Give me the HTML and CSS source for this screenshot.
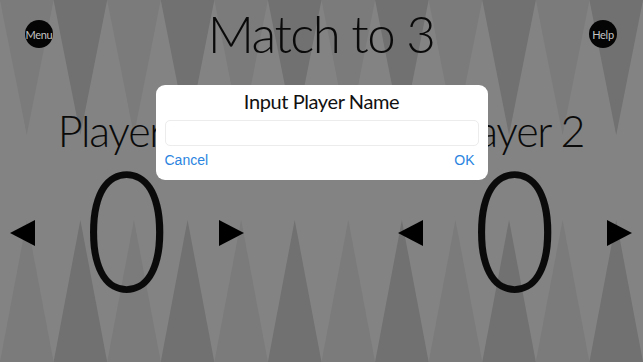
FILE: index.html
```html
<html>
  <head>
    <title>Match to 3</title>
    <link rel="stylesheet" href="styles.css">
  </head>
  <body>
    <div class="screen">
      <svg class="board" viewBox="0 0 12 362" preserveAspectRatio="none">
        <g class="point-light">
          <polygon points="0,0 0.5,135 1,0"/>
          <polygon points="2,0 2.5,135 3,0"/>
          <polygon points="4,0 4.5,135 5,0"/>
          <polygon points="6,0 6.5,135 7,0"/>
          <polygon points="8,0 8.5,135 9,0"/>
          <polygon points="10,0 10.5,135 11,0"/>
          <polygon points="0,362 0.5,220 1,362"/>
          <polygon points="2,362 2.5,220 3,362"/>
          <polygon points="4,362 4.5,220 5,362"/>
          <polygon points="6,362 6.5,220 7,362"/>
          <polygon points="8,362 8.5,220 9,362"/>
          <polygon points="10,362 10.5,220 11,362"/>
        </g>
        <g class="point-dark">
          <polygon points="1,0 1.5,135 2,0"/>
          <polygon points="3,0 3.5,135 4,0"/>
          <polygon points="5,0 5.5,135 6,0"/>
          <polygon points="7,0 7.5,135 8,0"/>
          <polygon points="9,0 9.5,135 10,0"/>
          <polygon points="11,0 11.5,135 12,0"/>
          <polygon points="1,362 1.5,220 2,362"/>
          <polygon points="3,362 3.5,220 4,362"/>
          <polygon points="5,362 5.5,220 6,362"/>
          <polygon points="7,362 7.5,220 8,362"/>
          <polygon points="9,362 9.5,220 10,362"/>
          <polygon points="11,362 11.5,220 12,362"/>
        </g>
      </svg>

      <div class="top-bar">
        <div class="round-btn">Menu</div>
        <h1 class="match">Match to 3</h1>
        <div class="round-btn">Help</div>
      </div>

      <div class="players">
        <div class="player">
          <h2 class="name">Player 1</h2>
          <div class="score-row">
            <span class="arrow left"></span>
            <span class="score">0</span>
            <span class="arrow right"></span>
          </div>
        </div>
        <div class="player">
          <h2 class="name">Player 2</h2>
          <div class="score-row">
            <span class="arrow left"></span>
            <span class="score">0</span>
            <span class="arrow right"></span>
          </div>
        </div>
      </div>

      <div class="overlay">
        <div class="alert">
          <div class="alert-title">Input Player Name</div>
          <input class="alert-input" type="text">
          <div class="alert-actions">
            <span>Cancel</span>
            <span>OK</span>
          </div>
        </div>
      </div>
    </div>
  </body>
</html>
```

FILE: styles.css
```css
body {margin: 0; background-color: #838383;}

.screen {
  position: relative;
  width: 643px;
  height: 362px;
  overflow: hidden;
  font-family: Lato, "Open Sans", sans-serif;
  color: #0a0a0a;
}

.board {position: absolute; top: 0; left: 0; width: 643px; height: 362px;}
.point-light {fill: #7b7b7b;}
.point-dark {fill: #717171;}

.top-bar {
  position: relative;
  display: flex;
  justify-content: space-between;
  align-items: flex-start;
  height: 28px;
  padding: 20px 26px 0 25px;
}
.round-btn {
  width: 28px;
  height: 28px;
  border-radius: 50%;
  background-color: #050505;
  color: #c4c4c4;
  font-size: 11px;
  letter-spacing: -0.3px;
  display: flex;
  align-items: center;
  justify-content: center;
}
.match {
  margin: -12px 0 0 0;
  font-size: 51px;
  line-height: 51px;
  letter-spacing: -1.6px;
  font-weight: 300;
}

.players {
  position: relative;
  display: flex;
  justify-content: space-between;
  padding: 0 11px 0 10px;
  margin-top: 61px;
}
.player {width: 234px; display: flex; flex-direction: column; align-items: center;}
.name {margin: 0; font-size: 43px; line-height: 43px; letter-spacing: -1.3px; font-weight: 300;}
.score-row {
  width: 234px;
  margin-top: 14px;
  display: flex;
  justify-content: space-between;
  align-items: center;
}
.score {font-size: 168px; line-height: 122px; font-weight: 300; transform: scaleX(0.86);}
.arrow {width: 25px; height: 26px; margin-top: 12px; background-color: #000;}
.arrow.left {clip-path: polygon(0 50%, 100% 0, 100% 100%);}
.arrow.right {clip-path: polygon(0 0, 100% 50%, 0 100%);}

.overlay {
  position: absolute;
  top: 0;
  left: 0;
  right: 0;
  bottom: 0;
  display: flex;
  justify-content: center;
  align-items: flex-start;
  padding-top: 85px;
}
.alert {
  width: 332px;
  height: 95px;
  box-sizing: border-box;
  background-color: #fff;
  border-radius: 9px;
  padding-top: 6px;
  display: flex;
  flex-direction: column;
}
.alert-title {text-align: center; font-size: 20px; line-height: 21px; letter-spacing: -0.4px; color: #111;}
.alert-input {
  margin: 8px 9px 0 9px;
  height: 26px;
  box-sizing: border-box;
  border: 1px solid #ececec;
  border-radius: 5px;
  background: #fff;
  outline: none;
}
.alert-actions {
  display: flex;
  justify-content: space-between;
  margin-top: 6px;
  padding: 0 13px 0 9px;
  font-family: "Liberation Sans", Arial, sans-serif;
  font-size: 14px;
  line-height: 16px;
  color: #2a84e0;
}
```
